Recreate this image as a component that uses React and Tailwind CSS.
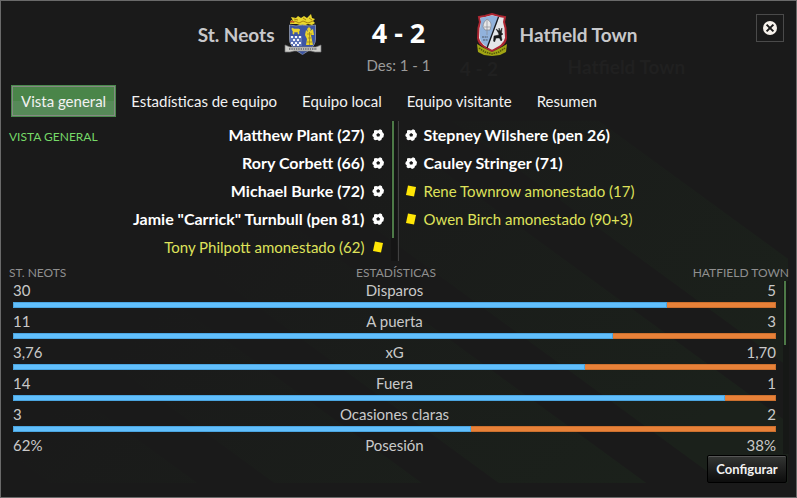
import React from 'react';

const TABS = ['Vista general', 'Estadísticas de equipo', 'Equipo local', 'Equipo visitante', 'Resumen'];

const HOME_EVENTS = [
  { text: 'Matthew Plant (27)', type: 'goal' },
  { text: 'Rory Corbett (66)', type: 'goal' },
  { text: 'Michael Burke (72)', type: 'goal' },
  { text: 'Jamie "Carrick" Turnbull (pen 81)', type: 'goal' },
  { text: 'Tony Philpott amonestado (62)', type: 'card' },
];

const AWAY_EVENTS = [
  { text: 'Stepney Wilshere (pen 26)', type: 'goal' },
  { text: 'Cauley Stringer (71)', type: 'goal' },
  { text: 'Rene Townrow amonestado (17)', type: 'card' },
  { text: 'Owen Birch amonestado (90+3)', type: 'card' },
];

const STATS = [
  { label: 'Disparos', home: '30', away: '5', share: 30 / 35 },
  { label: 'A puerta', home: '11', away: '3', share: 11 / 14 },
  { label: 'xG', home: '3,76', away: '1,70', share: 3 / 4 },
  { label: 'Fuera', home: '14', away: '1', share: 14 / 15 },
  { label: 'Ocasiones claras', home: '3', away: '2', share: 3 / 5 },
  { label: 'Posesión', home: '62%', away: '38%', share: null },
];

function Ball() {
  return (
    <svg viewBox="0 0 12 12" className="h-3 w-3 shrink-0" aria-hidden="true">
      <path d="M4 1 6 1.600 8 0.300 10 1.200 10.300 3 12 5 11.400 8.300 10 9 9.300 11 7 12 5.500 10.800 3 11.300 1.500 10 1.800 8.200 0.300 7 0.800 4.800 2 4 2 1.600Z" fill="#fff" />
      <path d="M6.200 4 8.100 5.400 7.400 7.600H5L4.300 5.400Z" fill="#1a1a1a" />
    </svg>
  );
}

function Card() {
  return (
    <svg viewBox="0 0 12 12" className="h-3 w-3 shrink-0" aria-hidden="true">
      <path d="M3 0.500 11 2 9 11.500 1 10Z" fill="#ffe606" />
    </svg>
  );
}

function Event({ event, side }) {
  const tone = event.type === 'goal' ? 'text-base font-bold text-white' : 'text-[#dfe25a]';
  const dir = side === 'home' ? 'flex-row-reverse pr-[7px]' : 'pl-[6px]';
  return (
    <li className={`flex h-7 items-center gap-[7px] whitespace-nowrap ${tone} ${dir}`}>
      {event.type === 'goal' ? <Ball /> : <Card />}
      <span>{event.text}</span>
    </li>
  );
}

function HomeCrest() {
  return (
    <svg viewBox="0 0 38 42" className="h-[42px] w-[38px] shrink-0" role="img" aria-label="St. Neots">
      <path d="M6 10 7 6 9 7 7 3 12 4 14 2 17 4 20 2 23 4 27 0 28 4 31 5 29 7 31 9 28 11 24 10 19 12 13 10Z" fill="#e9d72c" />
      <path d="M7 9 11 7 15 9 19 7 24 9 29 7M10 5 14 6M19 4 22 6M25 4 28 6" stroke="#a98312" fill="none" />
      <path d="M6 8 9 7 10 9" stroke="#c84626" fill="none" />
      <path d="M5.500 11Q12 13 18.500 11Q25 13 31.500 11V25C31.500 34 22 38 18.500 40.500C15 38 5.500 34 5.500 25Z" fill="#3c55a5" stroke="#7d879f" />
      <path d="M8 14 10 15H15L16 16 15 17V20H14V18H10V20H9V17L8 16Z" fill="#ecd52d" stroke="#ecd52d" strokeWidth=".6" />
      <path d="M6 22H18V32H9L6 28Z" fill="#5e74b8" />
      <path d="M7 22h2v2H7zM11 22h2v2h-2zM15 22h2v2h-2zM9 25h2v2H9zM13 25h2v2h-2zM7 28h2v2H7zM11 28h2v2h-2zM15 28h2v2h-2zM9 30h2v2H9zM13 30h2v2h-2z" fill="#f4f6fb" />
      <path d="M25 13 27 15 26 17 29 15 30 21 27 21 28 26 29 31H22L23 25 21 21 22 16 24 18 23 15Z" fill="#e8d32c" />
      <path d="M23 20H28M24 24H27M23 28H28M25.500 18V31" stroke="#8c7920" strokeWidth=".7" />
      <path d="M1 31 6 33H32L37 31V38H31L27 37H10L6 38H1Z" fill="#cfcfcb" stroke="#77777a" strokeWidth=".7" />
      <path d="M5 35H33" stroke="#63646a" strokeWidth="1.500" strokeDasharray="1.500 .8" />
      <path d="M17 38H20L18.500 41Z" fill="#3a54a4" />
    </svg>
  );
}

function AwayCrest() {
  return (
    <svg viewBox="0 0 32 44" className="h-11 w-8 shrink-0" role="img" aria-label="Hatfield Town">
      <path d="M3 4 9 3 16 1 23 3 29 4 28 9 29.500 15 30 25C29 32 22 35 16 38C10 35 3 32 2 25L2.500 15 4 9Z" fill="#e4e6e9" stroke="#ad2632" strokeWidth="2" />
      <path d="M4.500 5 16 2.500 23 4 12 34C7 31 4 29 4 24V16L5 9Z" fill="#91b2dc" />
      <path d="M22.500 4 11 35" stroke="#18191d" strokeWidth="1.300" />
      <path d="M11 6C14 8 15.500 10 15 13L14 17H9L7 14C7 10 9 8 11 6Z" fill="#e6e7e9" stroke="#7f838a" strokeWidth=".7" />
      <path d="M11 7V22M8 14H14" stroke="#868b94" strokeWidth=".7" />
      <path d="M6 24H12M7 27H12" stroke="#4c5665" strokeWidth="1.200" strokeDasharray="2 .6" />
      <path d="M26 15 25.500 20 27 21 25 22.500 26 27 25 28 23.500 25 20 25 18.500 29 17.500 28 18 23 23 22 22.500 20 20 16 23 18 23 15 24 18.500Z" fill="#17181a" stroke="#17181a" strokeWidth=".5" />
      <path d="M1 31 6 34 16 39 26 34 31 31 30 39 24 42 16 43 8 42 2 39Z" fill="#a1a414" />
      <path d="M3 35 9 39 16 41 23 39 29 35" fill="none" stroke="#52570b" strokeWidth="1.500" strokeDasharray="1.500 .8" />
    </svg>
  );
}

function CloseIcon() {
  return (
    <svg viewBox="0 0 14 14" className="h-[14px] w-[14px]" aria-hidden="true">
      <circle cx="7" cy="7" r="7" fill="#f7f2ec" />
      <path d="M3.600 3.600 10.400 10.400M10.400 3.600 3.600 10.400" stroke="#1a1a1a" strokeWidth="2" />
    </svg>
  );
}

/* Diagonal stripes and the dimmed scoreboard that shows through the dialog. */
function Backdrop() {
  return (
    <svg viewBox="0 0 797 498" preserveAspectRatio="none" className="absolute inset-0 -z-10 h-full w-full" aria-hidden="true">
      <defs>
        <linearGradient id="fade" gradientUnits="userSpaceOnUse" x1="330" y1="150" x2="640" y2="484">
          <stop offset="0" stopColor="#1b211b" stopOpacity="0" />
          <stop offset="1" stopColor="#1b211b" />
        </linearGradient>
        <clipPath id="panel">
          <path d="M8 120H789V484H8Z" />
        </clipPath>
      </defs>
      <g fill="url(#fade)" clipPath="url(#panel)">
        <path d="M49 484 -449 120H-301L197 484Z" />
        <path d="M274 484 -224 120H-76L422 484Z" />
        <path d="M499 484 1 120H149L647 484Z" />
        <path d="M724 484 226 120H374L872 484Z" />
        <path d="M949 484 451 120H599L1097 484Z" />
      </g>
      <g fill="#202020" fontFamily="Lato, sans-serif" fontWeight="700">
        <text x="568" y="73" fontSize="19">Hatfield Town</text>
        <text x="460" y="75" fontSize="19">4 - 2</text>
      </g>
    </svg>
  );
}

export default function App() {
  return (
    <main className="relative isolate flex min-h-screen flex-col border border-[#6a6a6a] bg-[#1a1a1a] font-[Lato,sans-serif] text-[15px] leading-5 text-[#c9c9c9]">
      <Backdrop />

      <header className="grid h-[84px] grid-cols-[1fr_154px_1fr] pt-3">
        <div className="flex h-11 items-center justify-end gap-[9px]">
          <h2 className="text-[19px] font-bold text-[#c8c8cb]">St. Neots</h2>
          <HomeCrest />
        </div>
        <div className="text-center">
          <p className="h-[42px] font-['Open_Sans',sans-serif] text-[27px] leading-10 font-bold text-white">4 - 2</p>
          <p className="text-[#9b9b9b]">Des: 1 - 1</p>
        </div>
        <div className="flex items-start pr-3">
          <div className="flex h-11 items-center gap-3">
            <AwayCrest />
            <h2 className="text-[19px] font-bold text-[#c8c8cb]">Hatfield Town</h2>
          </div>
          <button type="button" aria-label="Cerrar" className="mt-px ml-auto flex h-7 w-7 items-center justify-center border border-[#4a4a4a]">
            <CloseIcon />
          </button>
        </div>
      </header>

      <nav className="flex gap-[5px] pl-[10px]">
        {TABS.map((tab, i) => (
          <button
            key={tab}
            type="button"
            className={
              i === 0
                ? 'h-8 border border-[#4a8a4d] bg-linear-to-b from-[#4a8549] from-50% to-[#568a58] to-50% px-[9px] text-[#f2f2f2] inset-ring inset-ring-[#858a83]'
                : 'h-8 border border-transparent px-[9px] text-[#f2f2f2]'
            }
          >
            {tab}
          </button>
        ))}
      </nav>

      <section className="mt-1 grid h-[140px] grid-cols-2">
        <div className="flex justify-between">
          <h3 className="mt-[6px] ml-2 text-xs leading-5 whitespace-nowrap text-[#76d968]">VISTA GENERAL</h3>
          <div className="flex">
            <ul>{HOME_EVENTS.map((e) => <Event key={e.text} event={e} side="home" />)}</ul>
            <div className="mr-[2px] w-[6px] bg-[#151515]">
              <div className="ml-px h-[117px] w-[2px] bg-[#4d7a47]" />
            </div>
          </div>
        </div>
        <ul className="-ml-px border-l border-[#414141]">
          {AWAY_EVENTS.map((e) => <Event key={e.text} event={e} side="away" />)}
        </ul>
      </section>

      <section className="mt-[2px] pr-[7px] pl-2">
        <div className="grid grid-cols-3 text-xs leading-5 text-[#8f8f8f]">
          <h3>ST. NEOTS</h3>
          <h3 className="pr-[6px] text-center">ESTADÍSTICAS</h3>
          <h3 className="text-right">HATFIELD TOWN</h3>
        </div>
        <div className="-mt-1 flex h-[175px]">
          <div className="flex-1 pl-1">
            {STATS.map((s) => (
              <div key={s.label} className="mb-[2px]">
                <div className="grid h-[22px] grid-cols-3 items-center">
                  <span>{s.home}</span>
                  <span className="text-center">{s.label}</span>
                  <span className="text-right">{s.away}</span>
                </div>
                {s.share !== null && (
                  <div className="mt-px flex h-[6px] bg-[#e88138] inset-ring inset-ring-[#cb702f]">
                    <div className="bg-[#61bffc] inset-ring inset-ring-[#4ba5e0]" style={{ width: `${s.share * 100}%` }} />
                  </div>
                )}
              </div>
            ))}
          </div>
          <div className="mt-[2px] ml-[7px] w-[6px] bg-[#161816]">
            <div className="ml-px h-16 w-[2px] bg-[#4d7a47]" />
          </div>
        </div>
      </section>

      <footer className="flex justify-end pt-px pr-[9px] pb-3">
        <button type="button" className="h-7 w-20 rounded-xs border border-black bg-linear-to-b from-[#343634] to-[#0d0d0d] text-[13px] font-bold whitespace-nowrap text-[#f2f2f2] inset-shadow-[0_1px_0_#565656]">
          Configurar
        </button>
      </footer>
    </main>
  );
}
